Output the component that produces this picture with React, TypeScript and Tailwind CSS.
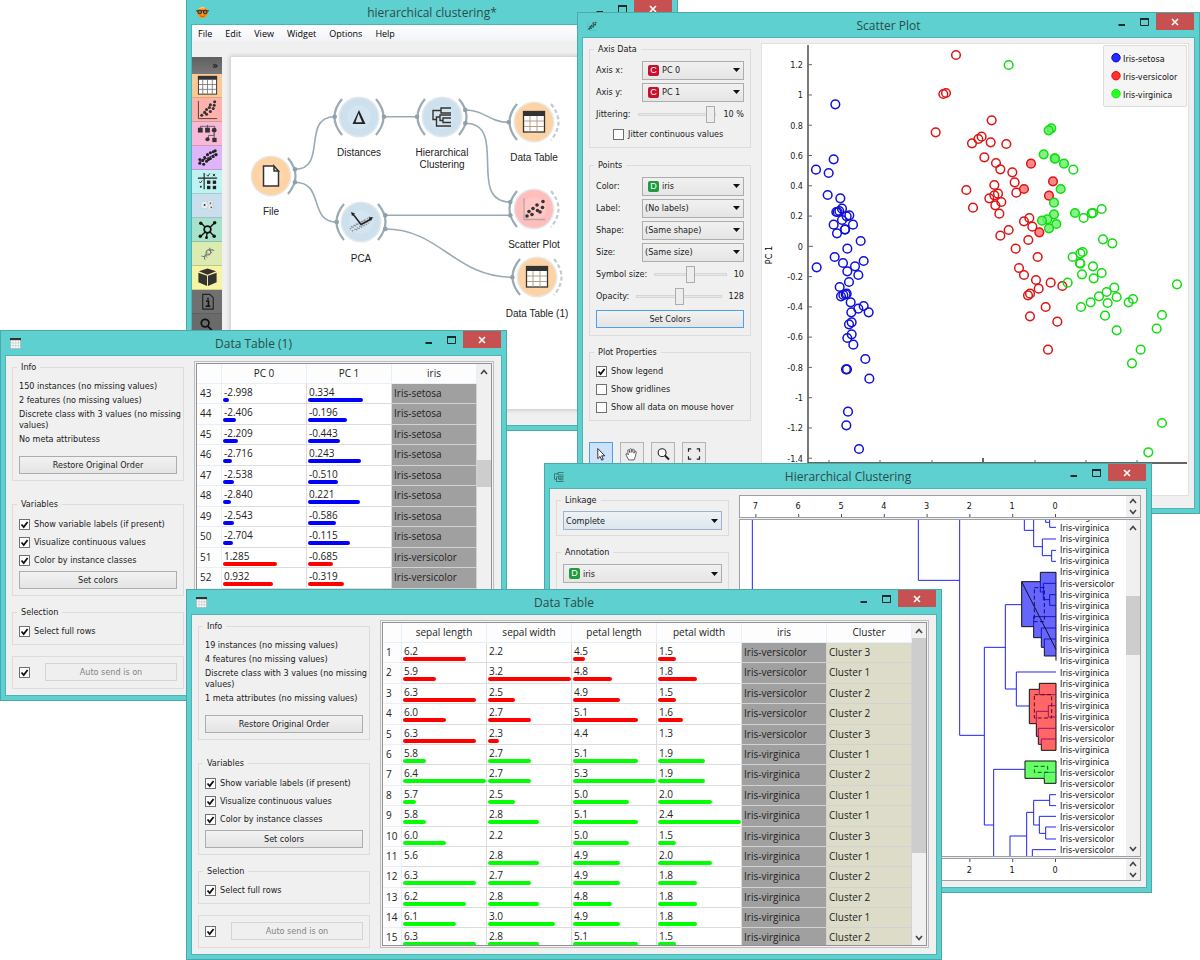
import type { ReactNode } from "react";
import clsx from "clsx";

/* ---------- Shared controls ---------- */

function TableGlyph({ className }: { className?: string }) {
  return (
    <svg viewBox="0 0 20 20" className={className} aria-hidden="true">
      <rect x="0.5" y="0.5" width="19" height="19" fill="#fff" stroke="#8aa3a3" />
      <rect x="0" y="0" width="20" height="4" fill="#333" />
      <path d="M5.5 4v15M10.5 4v15M15 4v15M1 9h18M1 14h18" stroke="#a9b5b5" strokeWidth="0.9" />
    </svg>
  );
}

function ScatterGlyph({ className }: { className?: string }) {
  return (
    <svg viewBox="0 0 22 22" className={className} aria-hidden="true">
      <path d="M1.5 1v19.5H21" fill="none" stroke="currentColor" strokeWidth="1" opacity="0.25" />
      <g fill="currentColor">
        <circle cx="5" cy="17" r="2" />
        <circle cx="9" cy="15.5" r="2" />
        <circle cx="7" cy="13" r="2" />
        <circle cx="10" cy="10.5" r="2" />
        <circle cx="13.5" cy="12.5" r="2" />
        <circle cx="14.5" cy="8.5" r="2" />
        <circle cx="18" cy="8" r="2" />
        <circle cx="14" cy="4.5" r="2" />
        <circle cx="19" cy="3.5" r="2" />
      </g>
    </svg>
  );
}

function ClusterGlyph({ className }: { className?: string }) {
  return (
    <svg viewBox="0 0 20 20" className={className} aria-hidden="true" fill="none" stroke="currentColor" strokeWidth="1.5">
      <path d="M19 1H8v5h11M8 3.500H1v11h4M9 9.500H19M12 12h7M12 12v3.500h7M5 9.500h4v5M5 9.500v9.500M12 14H9M5 19h14M5 14.500" />
    </svg>
  );
}

function OrangeGlyph({ className }: { className?: string }) {
  return (
    <svg viewBox="0 0 13 13" className={className} aria-hidden="true">
      <circle cx="6.5" cy="6.500" r="5.500" fill="#f7931e" />
      <path d="M3 3Q6 0.600 9 2.300" stroke="#ffd089" strokeWidth="1.200" fill="none" />
      <path d="M0 4.800h13" stroke="#3b2a1a" strokeWidth="0.900" />
      <circle cx="3.700" cy="6" r="1.900" fill="#8a7866" stroke="#2b1f14" strokeWidth="0.900" />
      <circle cx="9.200" cy="6" r="1.900" fill="#8a7866" stroke="#2b1f14" strokeWidth="0.900" />
      <path d="M4.200 9.800q2.300 1.500 4.600 0" stroke="#a34c00" strokeWidth="0.800" fill="none" />
    </svg>
  );
}

type WindowProps = { title: string; icon: ReactNode; className: string; children: ReactNode };

function Window({ title, icon, className, children }: WindowProps) {
  return (
    <section
      aria-label={title}
      className={clsx("absolute flex flex-col border border-[#4ba9a7] bg-[#5dd0cf] px-[5px] pb-[5px]", className)}
    >
      <header className="grid h-[25px] shrink-0 grid-cols-[1fr_auto_1fr] items-center">
        <span className="pl-1">{icon}</span>
        <h2 className="font-['Open_Sans',sans-serif] text-[12px] leading-none text-[#2c4b4b]">{title}</h2>
        <div className="flex items-start justify-end self-start">
          <button type="button" aria-label="Minimize" className="flex h-[17px] w-[20px] items-center justify-center">
            <svg viewBox="0 0 8 8" className="size-2" aria-hidden="true">
              <path d="M0.500 7h6.500" stroke="#1c2b2b" strokeWidth="2" />
            </svg>
          </button>
          <button type="button" aria-label="Maximize" className="flex h-[17px] w-[24px] items-center justify-center">
            <svg viewBox="0 0 9 8" className="h-2 w-[9px]" aria-hidden="true">
              <path d="M0.500 1h8v6.500h-8z" fill="none" stroke="#1c2b2b" />
              <path d="M0 1h9" stroke="#1c2b2b" strokeWidth="2" />
            </svg>
          </button>
          <button type="button" aria-label="Close" className="flex h-[17px] w-[38px] items-center justify-center bg-[#c75050]">
            <svg viewBox="0 0 8 8" className="size-2" aria-hidden="true">
              <path d="M1 1l6 6M7 1l-6 6" stroke="#fff" strokeWidth="1.600" />
            </svg>
          </button>
        </div>
      </header>
      <div className="flex min-h-0 flex-1 bg-[#f0f0f0] ring-1 ring-[#4db4b3]">{children}</div>
    </section>
  );
}

function Group({ title, className, children }: { title?: string; className?: string; children: ReactNode }) {
  return (
    <fieldset className="border border-[#dcdcdc]">
      {title && <legend className="ml-1 h-[12px] px-1 leading-[12px]">{title}</legend>}
      <div className={clsx("flex flex-col px-[6px]", className)}>{children}</div>
    </fieldset>
  );
}

function Check({ label, hideLabel, checked }: { label: string; hideLabel?: boolean; checked?: boolean }) {
  return (
    <label className="flex h-[18px] items-center gap-1">
      <span className="grid size-[11px] shrink-0">
        <input
          type="checkbox"
          aria-label={hideLabel ? label : undefined}
          defaultChecked={checked}
          className="peer col-start-1 row-start-1 size-[11px] appearance-none border border-[#707070] bg-white"
        />
        <svg viewBox="0 0 11 11" className="pointer-events-none invisible col-start-1 row-start-1 size-[11px] peer-checked:visible" aria-hidden="true">
          <path d="M2.500 5.500l2.200 2.500L8.600 3" fill="none" stroke="#111" strokeWidth="1.800" />
        </svg>
      </span>
      {!hideLabel && <span>{label}</span>}
    </label>
  );
}

function PushButton({ children, tone = "normal", disabled }: { children: ReactNode; tone?: "normal" | "focus"; disabled?: boolean }) {
  return (
    <button
      type="button"
      disabled={disabled}
      className={clsx(
        "h-[18px] w-full border leading-none",
        disabled && "border-[#d4d4d4] bg-[#efefef] text-[#838383]",
        !disabled && "bg-linear-to-b from-[#f2f2f2] to-[#e4e4e4]",
        !disabled && tone === "normal" && "border-[#adadad]",
        !disabled && tone === "focus" && "border-[#4f9ee8]",
      )}
    >
      {children}
    </button>
  );
}

type Kind = "C" | "D";

function ComboBox({ label, value, kind, tint }: { label: string; value: string; kind?: Kind; tint?: boolean }) {
  return (
    <span
      className={clsx(
        "flex h-[19px] min-w-0 flex-1 items-center border pr-[3px] pl-[2px]",
        tint ? "border-[#9fb4cc] bg-linear-to-b from-[#eef2f7] to-[#dde6ef]" : "border-[#adadad] bg-linear-to-b from-[#f1f1f1] to-[#e5e5e5]",
      )}
    >
      {kind && (
        <span
          className={clsx(
            "mr-[3px] ml-[3px] flex size-[11px] items-center justify-center rounded-[2px] font-['Liberation_Sans',sans-serif] text-[9px] leading-none text-white",
            kind === "C" ? "bg-[#c8102e]" : "bg-[#1f9a3c]",
          )}
        >
          {kind}
        </span>
      )}
      <select aria-label={label} defaultValue={value} className="min-w-0 flex-1 appearance-none bg-transparent leading-[12px] outline-none">
        <option>{value}</option>
      </select>
      <svg viewBox="0 0 7 4" className="pointer-events-none h-1 w-[7px]" aria-hidden="true">
        <path d="M0 0h7L3.500 4z" fill="#111" />
      </svg>
    </span>
  );
}

function Chevron({ down }: { down?: boolean }) {
  return (
    <svg viewBox="0 0 8 6" className="h-[6px] w-2" aria-hidden="true">
      <path d={down ? "M1 1l3 3.500L7 1" : "M1 5l3-3.500L7 5"} fill="none" stroke="#444" strokeWidth="1.600" />
    </svg>
  );
}

function ScrollBar({ offset, thumb }: { offset: string; thumb: string }) {
  return (
    <div className="flex w-[14px] shrink-0 flex-col bg-[#f0f0f0]">
      <button type="button" aria-label="Scroll up" className="flex h-[15px] items-center justify-center">
        <Chevron />
      </button>
      <span className={offset} />
      <span className={clsx("bg-[#cdcdcd]", thumb)} />
      <button type="button" aria-label="Scroll down" className="mt-auto flex h-[15px] items-center justify-center">
        <Chevron down />
      </button>
    </div>
  );
}

/* ---------- Data table windows ---------- */

type Column = { name: string; min?: number; max?: number; fill?: string };
type Row = { id: number; values: string[] };

const CLASS_BAR: Record<string, string> = {
  "Iris-setosa": "bg-[#0000ff]",
  "Iris-versicolor": "bg-[#ff0000]",
  "Iris-virginica": "bg-[#00ff00]",
};

function DataGrid({ columns, rows, classIndex, size, idWidth }: { columns: Column[]; rows: Row[]; classIndex: number; size: string; idWidth: string }) {
  return (
    <div className="min-w-0 flex-1 overflow-hidden bg-white">
      <table className={clsx("w-full table-fixed border-separate border-spacing-0 font-['Open_Sans',sans-serif] text-[10px] text-[#222]", size)}>
        <colgroup>
          <col className={idWidth} />
          {columns.map((c) => (
            <col key={c.name} />
          ))}
        </colgroup>
        <thead>
          <tr className="h-[20px]">
            <td className="border-r border-b border-[#e6effa] bg-[#fdfdfd]" />
            {columns.map((c) => (
              <th key={c.name} scope="col" className="border-r border-b border-[#e6effa] bg-[#fdfdfd] p-0 text-center leading-[19px] font-normal">
                {c.name}
              </th>
            ))}
          </tr>
        </thead>
        <tbody>
          {rows.map((row) => (
            <tr key={row.id}>
              <th scope="row" className="border-r border-b border-[#e6effa] bg-[#fdfdfd] py-0 pr-0 pl-[3px] text-left align-top leading-[19px] font-normal">
                {row.id}
              </th>
              {row.values.map((v, i) => {
                const { min, max, fill } = columns[i];
                if (min === undefined || max === undefined) {
                  return (
                    <td key={i} className={clsx("border-r border-b border-[#d2d2d2] py-0 pr-0 pl-[2px] align-top leading-[19px]", fill)}>
                      {v}
                    </td>
                  );
                }
                const share = (Number(v) - min) / (max - min);
                return (
                  <td key={i} className="border-r border-b border-[#dcdcdc] p-0 pl-px align-top">
                    <div className="h-[14px] pl-px leading-[17px]">{v}</div>
                    {share > 0.001 && (
                      <div className={clsx("h-1 rounded-full", CLASS_BAR[row.values[classIndex]])} style={{ width: Math.round(3 + 80 * share) }} />
                    )}
                  </td>
                );
              })}
            </tr>
          ))}
        </tbody>
      </table>
    </div>
  );
}

const VS = "Iris-versicolor";
const VG = "Iris-virginica";
const SE = "Iris-setosa";

const clusterColumns: Column[] = [
  { name: "sepal length", min: 5.6, max: 6.4 },
  { name: "sepal width", min: 2.2, max: 3.2 },
  { name: "petal length", min: 4.4, max: 5.3 },
  { name: "petal width", min: 1.3, max: 2.4 },
  { name: "iris", fill: "bg-[#a0a0a0]" },
  { name: "Cluster", fill: "bg-[#dcdcc8]" },
];

const clusterRows: Row[] = [
  ["6.2", "2.2", "4.5", "1.5", VS, "Cluster 3"],
  ["5.9", "3.2", "4.8", "1.8", VS, "Cluster 1"],
  ["6.3", "2.5", "4.9", "1.5", VS, "Cluster 2"],
  ["6.0", "2.7", "5.1", "1.6", VS, "Cluster 2"],
  ["6.3", "2.3", "4.4", "1.3", VS, "Cluster 3"],
  ["5.8", "2.7", "5.1", "1.9", VG, "Cluster 1"],
  ["6.4", "2.7", "5.3", "1.9", VG, "Cluster 2"],
  ["5.7", "2.5", "5.0", "2.0", VG, "Cluster 1"],
  ["5.8", "2.8", "5.1", "2.4", VG, "Cluster 1"],
  ["6.0", "2.2", "5.0", "1.5", VG, "Cluster 3"],
  ["5.6", "2.8", "4.9", "2.0", VG, "Cluster 1"],
  ["6.3", "2.7", "4.9", "1.8", VG, "Cluster 2"],
  ["6.2", "2.8", "4.8", "1.8", VG, "Cluster 2"],
  ["6.1", "3.0", "4.9", "1.8", VG, "Cluster 1"],
  ["6.3", "2.8", "5.1", "1.5", VG, "Cluster 2"],
].map((values, i) => ({ id: i + 1, values }));

const pcaColumns: Column[] = [
  { name: "PC 0", min: -3.3, max: 3.9 },
  { name: "PC 1", min: -1.407, max: 1.253 },
  { name: "iris", fill: "bg-[#a0a0a0]" },
];

const pcaRows: Row[] = [
  ["-2.998", "0.334", SE],
  ["-2.406", "-0.196", SE],
  ["-2.209", "-0.443", SE],
  ["-2.716", "0.243", SE],
  ["-2.538", "-0.510", SE],
  ["-2.840", "0.221", SE],
  ["-2.543", "-0.586", SE],
  ["-2.704", "-0.115", SE],
  ["1.285", "-0.685", VS],
  ["0.932", "-0.319", VS],
  ["1.464", "-0.504", VS],
].map((values, i) => ({ id: i + 43, values }));

function TableWindow({ title, className, info, children }: { title: string; className: string; info: string[]; children: ReactNode }) {
  return (
    <Window title={title} className={className} icon={<TableGlyph className="size-[11px]" />}>
      <div className="ml-[6px] flex w-[172px] shrink-0 flex-col pt-[5px]">
        <Group title="Info" className="pt-2 pb-[6px]">
          <div className="-mr-[6px] mb-[11px] flex flex-col gap-[3px] leading-[11px]">
            {info.map((line) => (
              <p key={line}>{line}</p>
            ))}
          </div>
          <PushButton>Restore Original Order</PushButton>
        </Group>
        <div className="mt-[17px]">
          <Group title="Variables" className="pt-[5px] pb-[6px]">
            <Check label="Show variable labels (if present)" checked />
            <Check label="Visualize continuous values" checked />
            <Check label="Color by instance classes" checked />
            <div className="mt-[2px]">
              <PushButton>Set colors</PushButton>
            </div>
          </Group>
        </div>
        <div className="mt-[10px]">
          <Group title="Selection" className="pt-1 pb-1">
            <Check label="Select full rows" checked />
          </Group>
        </div>
        <div className="mt-[11px]">
          <Group className="pt-[6px] pb-[7px]">
            <div className="flex items-center gap-[15px]">
              <Check label="Auto send" hideLabel checked />
              <PushButton disabled>Auto send is on</PushButton>
            </div>
          </Group>
        </div>
      </div>
      <div className="mt-[5px] mr-[7px] mb-[6px] ml-[10px] flex min-w-0 flex-1 border border-[#bdbdbd] bg-[#f4f4f4] p-px">
        <div className="flex min-w-0 flex-1 overflow-hidden border border-[#8f9299]">{children}</div>
      </div>
    </Window>
  );
}

/* ---------- Workflow window ---------- */

const DELTA_FILL = "#cde0ee";
const ORANGE_FILL = "#fed3a3";
const PINK_FILL = "#ffbdbb";

type Node = { x: number; y: number; label: string[]; labelY: number; fill: string; input?: boolean; output: "solid" | "dashed"; glyph: ReactNode };

const nodes: Node[] = [
  {
    x: 271, y: 176, label: ["File"], labelY: 215, fill: ORANGE_FILL, output: "solid",
    glyph: <path d="M-7.500 -10h10.500l4.500 5v15h-15zM3 -10v5h4.500z" fill="#fff" stroke="#333" strokeWidth="1.500" />,
  },
  {
    x: 359, y: 117, label: ["Distances"], labelY: 156, fill: DELTA_FILL, input: true, output: "solid",
    glyph: <path d="M-6.500 7L0 -7L6.500 7zM-3.500 5.200H3.200L-0.500 -3.500z" fill="#222" fillRule="evenodd" />,
  },
  {
    x: 442, y: 117, label: ["Hierarchical", "Clustering"], labelY: 156, fill: DELTA_FILL, input: true, output: "solid",
    glyph: <path d="M9 -9H-1v5H9M-1 -6.500H-9v9h3.500M9 1H1v4.500H9M1 -2H9M1 3.500H-2v-5.500H1M-2 0H-5.500V9H9M-5.500 9" fill="none" stroke="#333" strokeWidth="1.400" />,
  },
  { x: 534, y: 122, label: ["Data Table"], labelY: 161, fill: ORANGE_FILL, input: true, output: "dashed", glyph: <GridMark /> },
  {
    x: 534, y: 209, label: ["Scatter Plot"], labelY: 248, fill: PINK_FILL, input: true, output: "dashed",
    glyph: (
      <g>
        <path d="M-10 -11V10.500H11" fill="none" stroke="#b9a5a5" strokeWidth="1.300" />
        <g fill="#333">
          {[[-7, 7], [-2, 5.500], [-5, 2.500], [-1, -0.500], [3.500, 1.500], [3, -4], [8.500, -1.500], [9, -7.500], [6, 3]].map(([cx, cy]) => (
            <circle key={`${cx},${cy}`} cx={cx} cy={cy} r="1.800" />
          ))}
        </g>
      </g>
    ),
  },
  {
    x: 361, y: 222, label: ["PCA"], labelY: 262, fill: DELTA_FILL, input: true, output: "solid",
    glyph: (
      <g>
        <path d="M-11 7L9 -5M-9 9L10 -2M-10 5L4 -2M-5 8L8 1" stroke="#8a9299" strokeWidth="1.500" strokeDasharray="1.300 1.500" />
        <path d="M-8 -8L0 2.500L10 -3" fill="none" stroke="#222" strokeWidth="1.500" />
        <path d="M-10 -10l4 1.500l-3 2.500zM12 -5l-2 4l-2.500 -3.500z" fill="#222" />
      </g>
    ),
  },
  { x: 537, y: 277, label: ["Data Table (1)"], labelY: 317, fill: ORANGE_FILL, input: true, output: "dashed", glyph: <GridMark /> },
];

function GridMark() {
  return (
    <g>
      <rect x="-10.500" y="-10.500" width="21" height="20.500" fill="#fff" stroke="#333" strokeWidth="1.300" />
      <rect x="-11" y="-11" width="22" height="5" fill="#333" />
      <path d="M-4 -6v15.500M3 -6v15.500M-10 -1h20M-10 4.500h20" stroke="#b59f8b" strokeWidth="1" />
    </g>
  );
}

const links = [
  "M295 169.300C328 169.300 301 116.700 334.700 116.700",
  "M295 182.300C325 182.300 308 222 336.700 222",
  "M384 116.700H417",
  "M465.300 110C485 110 489 122.300 508.700 122.300",
  "M465.300 123.300C509 123.300 466 202 510.300 202",
  "M385.300 215.300H510.300",
  "M385.300 229C440 229 455 277.300 512.300 277.300",
];

const ports = [
  [295, 169.3], [295, 182.3], [334.7, 116.7], [384, 116.7], [417, 116.7], [465.3, 110], [465.3, 123.3],
  [508.7, 122.3], [510.3, 202], [510.3, 215.3], [512.3, 277.3], [336.7, 222], [385.3, 215.3], [385.3, 229],
];

function WorkflowCanvas() {
  return (
    <svg viewBox="231 57 441 352" className="h-[352px] w-[441px] font-['Liberation_Sans',sans-serif] text-[10px]" role="img" aria-label="Workflow">
      <g fill="none" stroke="#9aabb3" strokeWidth="1.600">
        {links.map((d) => (
          <path key={d} d={d} />
        ))}
      </g>
      {nodes.map((n) => (
        <g key={n.label.join(" ")} transform={`translate(${n.x} ${n.y})`}>
          <circle r="20.500" fill="#e4e8ea" />
          <circle r="19" fill={n.fill} />
          <circle r="12" fill="#fff" opacity="0.150" />
          {n.glyph}
          {n.input && <path d="M-17 -18Q-32 0 -17 18" fill="none" stroke="#9aabb3" strokeWidth="2.200" />}
          {n.output === "solid" && <path d="M17 -18Q32 0 17 18" fill="none" stroke="#9aabb3" strokeWidth="2.200" />}
          {n.output === "dashed" && <path d="M17 -18Q32 0 17 18" fill="none" stroke="#c3ccd1" strokeWidth="2.200" strokeDasharray="4 2.500" />}
        </g>
      ))}
      {ports.map(([x, y]) => (
        <circle key={`${x},${y}`} cx={x} cy={y} r="2.300" fill="#8fa0a9" />
      ))}
      <g fill="#222" textAnchor="middle">
        {nodes.map((n) =>
          n.label.map((line, i) => (
            <text key={n.label.join(" ") + line} x={n.x} y={n.labelY + i * 12}>
              {line}
            </text>
          )),
        )}
      </g>
    </svg>
  );
}

const toolbox: { name: string; tone: string; glyph: ReactNode }[] = [
  {
    name: "Data", tone: "bg-[#fcc995]",
    glyph: (
      <g>
        <rect x="2.500" y="2.500" width="19" height="18.500" fill="#fff" stroke="#333" />
        <rect x="2" y="2" width="20" height="4" fill="#333" />
        <path d="M7 6v15M12 6v15M17 6v15M3 11h18M3 16h18" stroke="#777" strokeWidth="0.900" />
      </g>
    ),
  },
  {
    name: "Visualize", tone: "bg-[#ffb1ab]",
    glyph: (
      <g>
        <path d="M2.500 3v18.500H22" fill="none" stroke="#444" strokeWidth="1" />
        <g fill="#333">
          {[[6, 18], [9, 15], [11, 17], [11, 12], [14, 10], [15, 14], [18, 11], [15, 7], [19, 7.500], [19.500, 4]].map(([x, y]) => (
            <circle key={`${x},${y}`} cx={x} cy={y} r="1.600" />
          ))}
        </g>
      </g>
    ),
  },
  {
    name: "Classify", tone: "bg-[#fab8d8]",
    glyph: (
      <g fill="#333">
        <path d="M4.500 8V4.500h15V8M12 3v6M19 10v4h-6v4M19 12v8" fill="none" stroke="#555" strokeWidth="0.900" />
        <rect x="2" y="6" width="5" height="5" />
        <rect x="9.500" y="6" width="5" height="5" />
        <circle cx="19" cy="8.500" r="2.500" />
        <circle cx="12" cy="18" r="2.200" />
        <rect x="17" y="16.500" width="4.500" height="4.500" />
      </g>
    ),
  },
  {
    name: "Regression", tone: "bg-[#e0b4fb]",
    glyph: (
      <g fill="#222">
        <path d="M3 17L21 8" stroke="#222" strokeWidth="0.900" />
        {[[4, 14], [4, 18], [7, 15], [8, 19], [9, 12], [11, 16], [12, 9], [13, 14], [15, 7], [15, 13], [18, 6], [18, 11], [20, 5], [21, 9]].map(([x, y]) => (
          <circle key={`${x},${y}`} cx={x} cy={y} r="1.600" />
        ))}
      </g>
    ),
  },
  {
    name: "Evaluate", tone: "bg-[#bef3f1]",
    glyph: (
      <g fill="#222">
        <path d="M2 8.500h20M8.500 3v17" stroke="#222" strokeWidth="1.200" />
        <path d="M11 5l1.500 1.500l2-3M17.500 4l2.500 2.500M20 4l-2.500 2.500M3.500 12l1 1.500L6.500 11" fill="none" stroke="#222" strokeWidth="0.900" />
        <circle cx="5" cy="17.500" r="1" />
        <rect x="11.500" y="11" width="3.500" height="3.500" />
        <rect x="17.500" y="11" width="3.500" height="3.500" />
        <rect x="11.500" y="16.500" width="3.500" height="3.500" />
        <rect x="17.500" y="16.500" width="3.500" height="3.500" />
      </g>
    ),
  },
  {
    name: "Unsupervised", tone: "bg-[#cadfee]",
    glyph: (
      <g>
        <circle cx="9" cy="11.500" r="4" fill="#e9edf0" stroke="#b7c4cc" strokeDasharray="1.500 1" />
        <circle cx="15" cy="9.500" r="3" fill="#e9edf0" stroke="#b7c4cc" strokeDasharray="1.500 1" />
        <circle cx="15.500" cy="14" r="3" fill="#e9edf0" stroke="#b7c4cc" strokeDasharray="1.500 1" />
        <circle cx="9" cy="11.500" r="1" fill="#333" />
        <circle cx="15" cy="9.500" r="0.900" fill="#555" />
        <circle cx="16" cy="14" r="0.900" fill="#555" />
      </g>
    ),
  },
  {
    name: "Network", tone: "bg-[#a8e2cb]",
    glyph: (
      <g fill="#111">
        <path d="M5 5l14 14M19.500 5L5 19M12 12l-1 8" stroke="#111" strokeWidth="1.400" />
        <circle cx="12" cy="12" r="3.500" fill="#a8e2cb" stroke="#111" strokeWidth="1.800" />
        <circle cx="5" cy="5.500" r="1.800" />
        <circle cx="19.500" cy="5" r="1.800" />
        <circle cx="4.500" cy="19" r="1.800" />
        <circle cx="19" cy="19" r="1.800" />
        <circle cx="11" cy="20.500" r="1.500" />
      </g>
    ),
  },
  {
    name: "Bioinformatics", tone: "bg-[#dcebb0]",
    glyph: (
      <g fill="none" stroke="#777" strokeWidth="1.100">
        <path d="M5.500 14.500c3 1.500 5.500 0.500 5-2.500s3-5.500 8.500-3M9.500 18.500c-1.500-3 0-5.500 2.500-5s5-2.500 2-7.500" />
        <path d="M9 13.500l3 3M11 10.500l3 3M13 8l4 3.500" strokeWidth="0.800" />
      </g>
    ),
  },
  {
    name: "Prototypes", tone: "bg-[#f6f3a2]",
    glyph: (
      <g fill="#333">
        <path d="M12 2.500l9 3l-9 3.500l-9-3.500z" />
        <path d="M2.500 7l9 3.300v10.500l-9-3.800zM21.500 7l-9 3.300v10.500l9-3.800z" />
      </g>
    ),
  },
  {
    name: "Information", tone: "bg-[#707070]",
    glyph: (
      <g>
        <path d="M7 4.500h7.500l3.500 3.500v12H7z" fill="none" stroke="#222" strokeWidth="1.200" />
        <path d="M12.500 8v1.800M10.500 11.500h2.500v5M10 17h5" fill="none" stroke="#111" strokeWidth="1.700" />
      </g>
    ),
  },
  {
    name: "Zoom", tone: "bg-[#6a6a6a]",
    glyph: (
      <g fill="none" stroke="#111" strokeWidth="1.800">
        <circle cx="9.500" cy="9.500" r="4" />
        <path d="M12.500 13l6 6" />
      </g>
    ),
  },
];

function WorkflowWindow() {
  return (
    <Window title="hierarchical clustering*" className="top-[-1px] left-[186px] h-[432px] w-[492px]" icon={<OrangeGlyph className="size-[13px]" />}>
      <div className="flex min-w-0 flex-1 flex-col">
        <nav className="flex h-[16px] shrink-0 items-center gap-[13px] bg-linear-to-b from-white to-[#f1f3f7] pl-[6px] font-['Open_Sans',sans-serif] text-[9px] text-black">
          {["File", "Edit", "View", "Widget", "Options", "Help"].map((item) => (
            <button key={item} type="button" className="leading-none">
              {item}
            </button>
          ))}
        </nav>
        <div className="flex min-h-0 flex-1 overflow-hidden pt-4">
          <div className="flex w-[30px] shrink-0 flex-col">
            <button type="button" aria-label="Expand toolbox" className="flex h-[17px] shrink-0 items-center justify-end bg-linear-to-b from-[#606060] to-[#787878] pr-1 text-[10px] leading-none font-bold text-[#161616]">
              »
            </button>
            {toolbox.map((t) => (
              <button key={t.name} type="button" aria-label={t.name} className={clsx("flex h-[24px] shrink-0 items-center justify-center border-b border-black/15", t.tone)}>
                <svg viewBox="0 0 24 24" className="size-[23px]" aria-hidden="true">
                  {t.glyph}
                </svg>
              </button>
            ))}
          </div>
          <div className="ml-[9px] h-[352px] flex-1 overflow-hidden bg-white shadow-[0_0_4px_1px_#c4c4c4]">
            <WorkflowCanvas />
          </div>
        </div>
      </div>
    </Window>
  );
}

/* ---------- Scatter plot window ---------- */

/* Marker centres in thirds of a pixel from the plot corner. */
const BLUE: number[][] = [
  [166, 193], [161, 358], [108, 389], [146, 399], [143, 465], [181, 475], [186, 506], [178, 513], [169, 516], [173, 516],
  [208, 526], [200, 529], [186, 540], [161, 554], [219, 554], [195, 568], [195, 569], [171, 580], [242, 603], [202, 626],
  [164, 651], [189, 669], [251, 663], [225, 679], [110, 682], [202, 694], [235, 705], [207, 726], [179, 741], [200, 761],
  [190, 765], [183, 769], [197, 763], [212, 787], [251, 798], [235, 806], [214, 817], [266, 817], [215, 847], [207, 853],
  [215, 883], [202, 894], [220, 914], [256, 957], [198, 988], [201, 988], [268, 1016], [204, 1115], [199, 1156], [237, 1227],
];
const RED: number[][] = [
  [528, 45], [490, 162], [498, 159], [635, 241], [467, 277], [605, 290], [595, 297], [576, 310], [632, 307], [679, 312],
  [613, 352], [648, 369], [661, 388], [697, 397], [704, 427], [709, 458], [559, 450], [643, 435], [654, 461], [643, 466],
  [628, 475], [664, 486], [646, 496], [579, 503], [658, 521], [748, 534], [732, 544], [757, 560], [745, 600], [686, 570],
  [661, 587], [707, 626], [773, 651], [717, 684], [732, 705], [768, 720], [812, 728], [847, 738], [776, 746], [750, 761],
  [744, 766], [797, 801], [750, 829], [832, 845], [804, 929],
];
const RED_SELECTED: number[][] = [[753, 371], [732, 447], [819, 424], [807, 467], [778, 577]];
const GREEN: number[][] = [
  [686, 75], [880, 389], [965, 507], [935, 520], [939, 519], [911, 534], [969, 598], [997, 610], [908, 636], [901, 640],
  [878, 651], [900, 669], [901, 671], [939, 679], [965, 699], [906, 703], [941, 715], [863, 728], [1191, 733], [1003, 743],
  [980, 756], [957, 769], [1010, 771], [1059, 777], [1046, 787], [983, 789], [932, 787], [903, 801], [975, 827], [1146, 825],
  [1130, 866], [1010, 871], [1082, 929], [1056, 970], [1146, 1149], [1105, 1237],
];
const GREEN_SELECTED: number[][] = [
  [814, 265], [806, 271], [791, 343], [824, 355], [825, 356], [852, 371], [842, 447], [822, 488], [885, 519], [822, 523],
  [802, 538], [786, 542], [829, 552], [807, 565],
];

function Markers({ points, stroke, fill = "none" }: { points: number[][]; stroke: string; fill?: string }) {
  return (
    <g stroke={stroke} fill={fill} strokeWidth="4.500">
      {points.map(([x, y], i) => (
        <circle key={i} cx={x} cy={y} r="13" />
      ))}
    </g>
  );
}

const yTicks = ["1.2", "1", "0.8", "0.6", "0.4", "0.2", "0", "-0.2", "-0.4", "-0.6", "-0.8", "-1", "-1.2", "-1.4"];
const legend = [
  { label: "Iris-setosa", dot: "#2a2aff", edge: "#0000e0" },
  { label: "Iris-versicolor", dot: "#ff3030", edge: "#f00000" },
  { label: "Iris-virginica", dot: "#2aff2a", edge: "#00f000" },
];

function ScatterChart() {
  return (
    <svg viewBox="762 44 426 451" className="h-[451px] w-[426px] font-['DejaVu_Sans_Condensed','DejaVu_Sans',sans-serif] text-[9px]" role="img" aria-label="PC 0 against PC 1">
      <path d="M808 45V463H1187" fill="none" stroke="#333" strokeWidth="1.300" />
      <g fill="#222" stroke="none" textAnchor="end">
        {yTicks.map((t, i) => (
          <text key={t} x="803" y={68 + i * 30.27}>
            {t}
          </text>
        ))}
      </g>
      <g stroke="#666" strokeWidth="1">
        {yTicks.map((t, i) => (
          <path key={t} d={`M808 ${64.7 + i * 30.27}h${t === "0" ? 5 : 4}`} />
        ))}
        {[829, 880, 932, 1035, 1086, 1137].map((x) => (
          <path key={x} d={`M${x} 463v-3`} />
        ))}
        <path d="M983 463v-5" strokeWidth="2" />
      </g>
      <text transform="translate(772 255) rotate(-90)" textAnchor="middle" fill="#000">
        PC 1
      </text>
      <g transform="translate(780 40) scale(0.33333)">
        <Markers points={BLUE} stroke="#1010d8" />
        <Markers points={RED} stroke="#dc1414" />
        <Markers points={RED_SELECTED} stroke="#dc1414" fill="#f88" />
        <Markers points={GREEN} stroke="#10dc10" />
        <Markers points={GREEN_SELECTED} stroke="#10dc10" fill="rgb(100 240 100 / 0.8)" />
      </g>
      <rect x="1103.500" y="45.500" width="83" height="61" rx="1.500" fill="#f5f5f5" stroke="#dcdcdc" />
      {legend.map((item, i) => (
        <g key={item.label}>
          <circle cx="1116" cy={57.7 + i * 18} r="4.200" fill={item.dot} stroke={item.edge} />
          <text x="1123" y={61.5 + i * 18} fill="#111">
            {item.label}
          </text>
        </g>
      ))}
    </svg>
  );
}

function ComboRow({ label, value, kind }: { label: string; value: string; kind?: Kind }) {
  return (
    <div className="flex h-[22px] items-center">
      <span className="w-[46px] shrink-0">{label}</span>
      <ComboBox label={label} value={value} kind={kind} />
    </div>
  );
}

function SliderRow({ label, id, value, shown }: { label: string; id: string; value: number; shown: string }) {
  return (
    <div className="flex h-[22px] items-center gap-[7px]">
      <label htmlFor={id} className="shrink-0">
        {label}
      </label>
      <input
        id={id}
        type="range"
        defaultValue={value}
        className="h-[17px] w-0 min-w-0 flex-1 appearance-none bg-transparent [&::-webkit-slider-runnable-track]:h-[3px] [&::-webkit-slider-runnable-track]:border [&::-webkit-slider-runnable-track]:border-[#d6d6d6] [&::-webkit-slider-runnable-track]:bg-[#e7eaea] [&::-webkit-slider-thumb]:mt-[-8px] [&::-webkit-slider-thumb]:h-[17px] [&::-webkit-slider-thumb]:w-[9px] [&::-webkit-slider-thumb]:appearance-none [&::-webkit-slider-thumb]:border [&::-webkit-slider-thumb]:border-[#acacac] [&::-webkit-slider-thumb]:bg-[#ededed]"
      />
      <output htmlFor={id} className="shrink-0">
        {shown}
      </output>
    </div>
  );
}

const plotTools: { name: string; active?: boolean; glyph: ReactNode }[] = [
  { name: "Select", active: true, glyph: <path d="M8.500 6v11l2.500-2.300l1.800 4l1.700-0.800l-1.800-3.900h3.500z" fill="#fff" stroke="#222" strokeWidth="1" /> },
  {
    name: "Pan",
    glyph: (
      <path
        d="M8.500 18.500l-2.500-4.500q-1.500-3 0.500-2.500l1.500 1.500l-0.800-5q0.500-1.500 1.600 0l0.800 2.500l0-3.800q1-1.200 1.900 0l0.300 3.600l0.800-3.400q1.200-0.900 1.700 0.400l-0.200 3.800l1.200-2.200q1.300-0.400 1.300 1l-0.800 4.500l-1.500 4z"
        fill="#fff"
        stroke="#444"
        strokeWidth="0.900"
      />
    ),
  },
  {
    name: "Zoom",
    glyph: (
      <g fill="none" stroke="#222">
        <circle cx="11" cy="10.500" r="4.300" fill="#fff" strokeWidth="1.200" />
        <path d="M14 13.500l4.500 4.500" strokeWidth="2.200" />
      </g>
    ),
  },
  { name: "Fit to view", glyph: <path d="M6 9.500v-3h3M15 6.500h3v3M18 14.500v3h-3M9 17.500H6v-3" fill="none" stroke="#222" strokeWidth="1.300" /> },
];

function ScatterWindow() {
  return (
    <Window title="Scatter Plot" className="top-[12px] left-[577px] h-[502px] w-[623px]" icon={<ScatterGlyph className="size-[10px] text-[#2c4b4b]" />}>
      <div className="ml-[6px] flex w-[162px] shrink-0 flex-col pt-[5px]">
        <Group title="Axis Data" className="pt-1 pb-1">
          <ComboRow label="Axis x:" value="PC 0" kind="C" />
          <ComboRow label="Axis y:" value="PC 1" kind="C" />
          <SliderRow id="jittering" label="Jittering:" value={99} shown="10 %" />
          <div className="pl-[17px]">
            <Check label="Jitter continuous values" />
          </div>
        </Group>
        <div className="mt-[11px]">
          <Group title="Points" className="pt-1 pb-[7px]">
            <ComboRow label="Color:" value="iris" kind="D" />
            <ComboRow label="Label:" value="(No labels)" />
            <ComboRow label="Shape:" value="(Same shape)" />
            <ComboRow label="Size:" value="(Same size)" />
            <SliderRow id="symbol-size" label="Symbol size:" value={50} shown="10" />
            <SliderRow id="opacity" label="Opacity:" value={51} shown="128" />
            <div className="mt-[3px]">
              <PushButton tone="focus">Set Colors</PushButton>
            </div>
          </Group>
        </div>
        <div className="mt-[10px]">
          <Group title="Plot Properties" className="pt-1 pb-1">
            <Check label="Show legend" checked />
            <Check label="Show gridlines" />
            <Check label="Show all data on mouse hover" />
          </Group>
        </div>
        <div className="mt-[21px] flex gap-[7px]">
          {plotTools.map((tool) => (
            <button
              key={tool.name}
              type="button"
              aria-label={tool.name}
              className={clsx("size-[24px] border", tool.active ? "border-[#4f9ee8] bg-[#cbe3fa]" : "border-[#b4b4b4] bg-[#ececec]")}
            >
              <svg viewBox="0 0 24 24" className="size-full" aria-hidden="true">
                {tool.glyph}
              </svg>
            </button>
          ))}
        </div>
      </div>
      <div className="mt-[5px] mr-[5px] mb-[12px] ml-[10px] min-w-0 flex-1 overflow-hidden border border-[#e2e2e2] bg-white">
        <ScatterChart />
      </div>
    </Window>
  );
}

/* ---------- Hierarchical clustering window ---------- */

const leaves = [
  VG, VG, VG, VG, VG, VS, VG, VG, VG, VG, VG, VG, VG, VG, VG, VG, VG, VG, VS, VS, VG, VG, VS, VS, VS, VS, VS, VS, VS, VS,
];

function Dendrogram() {
  return (
    <svg viewBox="740 519 386 338" className="h-[338px] w-[386px] shrink-0 font-['DejaVu_Sans_Condensed','DejaVu_Sans',sans-serif] text-[9px]" role="img" aria-label="Dendrogram">
      <g transform="translate(900 455) scale(0.33333)" fill="none" strokeWidth="3">
        <path
          stroke="#2020f8"
          d="M-443 190V1210M55 190V373H179M179 190V838H253M316 574H253V1107H281M365 446H316V699H349M468 648H349V750H388M375 940H281V1210
          M373 190V223H401M401 190V272H427M468 249H427V299H455M468 283H455V316H468M437 190V199H449M449 190V214H468
          M330 1210V1140H380M380 1210V1069H401M449 1033H401V1107H418M468 1016H449V1049H468M468 1081H418V1132H437M468 1113H437V1149H468M397 1210V1181H468"
        />
        <path d="M421 349H468V600H433V574H424V545H401V512H365V377H421z" fill="#6666ff" stroke="#111" />
        <path stroke="#1414c8" d="M421 377V408H430M468 382H430V431H449M468 416H449V448H468M401 512V482H468M424 545V516H468M433 574V549H468" />
        <path stroke="#111" d="M365 377L468 580M468 600V614" />
        <path stroke="#111166" strokeDasharray="12 7" d="M403 395H433V497H403z" />
        <path d="M418 682H468V883H424V865H415V841H409V803H388V700H418z" fill="#ff6666" stroke="#111" />
        <path stroke="#a01070" d="M418 700V716H468M468 749H445V783H468M409 803V766H445M415 841V817H468M424 865V849H468" />
        <path stroke="#551111" strokeDasharray="12 7" d="M403 716H455V786H403z" />
        <path d="M375 915H468V982H433V967H375z" fill="#66ff66" stroke="#111" />
        <path stroke="#10a070" d="M433 967V949H468" />
        <path stroke="#115511" strokeDasharray="12 7" d="M403 931H443V949H403z" />
      </g>
      <g fill="#111">
        <text x="1060" y="519">
          {VG}
        </text>
        {leaves.map((leaf, i) => (
          <text key={i} x="1060" y={530 + i * 11.12}>
            {leaf}
          </text>
        ))}
      </g>
    </svg>
  );
}

function AxisStrip({ side, ticks }: { side: "top" | "bottom"; ticks: number[] }) {
  const top = side === "top";
  return (
    <div className="flex h-[23px] shrink-0 border border-[#9c9fa5] bg-white">
      <div className="min-w-0 flex-1 overflow-hidden">
        <svg viewBox="740 0 386 21" className="h-[21px] w-[386px] font-['DejaVu_Sans_Condensed','DejaVu_Sans',sans-serif] text-[9px]" role="img" aria-label="Height axis">
          {ticks.map((t) => (
            <g key={t}>
              <path d={top ? `M${1055.5 - t * 42.8} 21v-3` : `M${1055.5 - t * 42.8} 0v3`} stroke="#555" />
              <text x={1055 - t * 42.8} y={top ? 13 : 14} textAnchor="middle" fill="#111">
                {t}
              </text>
            </g>
          ))}
        </svg>
      </div>
      <div className="flex w-[14px] flex-col bg-[#f0f0f0]">
        <button type="button" aria-label="Scroll left" className="flex flex-1 items-center justify-center">
          <Chevron />
        </button>
        <button type="button" aria-label="Scroll right" className="flex flex-1 items-center justify-center">
          <Chevron down />
        </button>
      </div>
    </div>
  );
}

function ClusteringWindow() {
  return (
    <Window title="Hierarchical Clustering" className="top-[463px] left-[544px] h-[430px] w-[608px]" icon={<ClusterGlyph className="size-[10px] text-[#2c6060]" />}>
      <div className="ml-[6px] flex w-[173px] shrink-0 flex-col pt-[5px]">
        <Group title="Linkage" className="pt-[5px] pb-[5px]">
          <div className="flex">
            <ComboBox label="Linkage" value="Complete" tint />
          </div>
        </Group>
        <div className="mt-[10px]">
          <Group title="Annotation" className="pt-[6px] pb-[60px]">
            <div className="flex">
              <ComboBox label="Annotation" value="iris" kind="D" />
            </div>
          </Group>
        </div>
      </div>
      <div className="mt-[6px] mr-[5px] mb-[6px] ml-[10px] flex min-w-0 flex-1 flex-col gap-px">
        <AxisStrip side="top" ticks={[7, 6, 5, 4, 3, 2, 1, 0]} />
        <div className="flex min-h-0 flex-1 border border-[#9c9fa5] bg-white">
          <div className="min-w-0 flex-1 overflow-hidden">
            <Dendrogram />
          </div>
          <ScrollBar offset="h-[61px]" thumb="h-[59px]" />
        </div>
        <AxisStrip side="bottom" ticks={[2, 1, 0]} />
      </div>
    </Window>
  );
}

/* ---------- Desktop ---------- */

export default function App() {
  return (
    <main className="relative min-h-screen overflow-hidden bg-white font-['DejaVu_Sans_Condensed','DejaVu_Sans',sans-serif] text-[9px] leading-[12px] text-[#1a1a1a]">
      <WorkflowWindow />
      <ScatterWindow />
      <ClusteringWindow />
      <TableWindow
        title="Data Table (1)"
        className="top-[330px] left-0 h-[371px] w-[507px]"
        info={["150 instances (no missing values)", "2 features (no missing values)", "Discrete class with 3 values (no missing values)", "No meta attributess"]}
      >
        <DataGrid columns={pcaColumns} rows={pcaRows} classIndex={2} size="h-[245px]" idWidth="w-[25px]" />
        <ScrollBar offset="h-[81px]" thumb="h-[27px]" />
      </TableWindow>
      <TableWindow
        title="Data Table"
        className="top-[589px] left-[186px] h-[371px] w-[756px]"
        info={["19 instances (no missing values)", "4 features (no missing values)", "Discrete class with 3 values (no missing values)", "1 meta attributes (no missing values)"]}
      >
        <DataGrid columns={clusterColumns} rows={clusterRows} classIndex={4} size="h-[326px]" idWidth="w-[19px]" />
        <ScrollBar offset="h-0" thumb="h-[215px]" />
      </TableWindow>
    </main>
  );
}
